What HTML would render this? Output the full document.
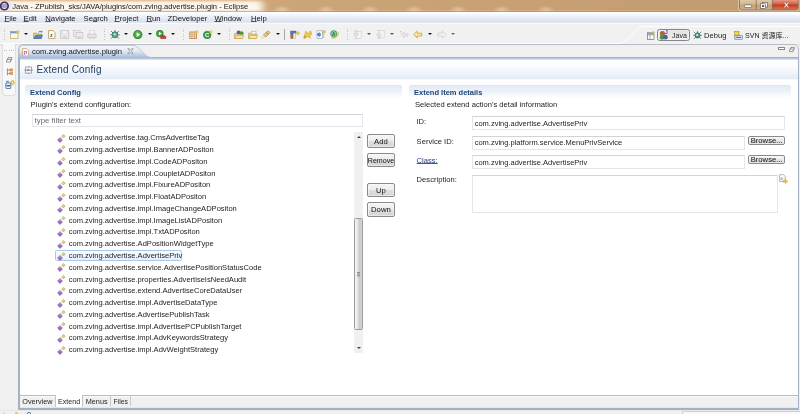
<!DOCTYPE html>
<html><head><meta charset="utf-8"><title>Java - ZPublish_sks/JAVA/plugins/com.zving.advertise.plugin - Eclipse</title>
<style>
html,body{margin:0;padding:0;}
body{width:800px;height:414px;position:relative;overflow:hidden;background:#f0f0f0;font-family:"Liberation Sans","Noto Sans CJK SC",sans-serif;font-size:7.62px;color:#242424;}
.a{position:absolute;}
.t{position:absolute;white-space:nowrap;line-height:10px;height:10px;}
#title{left:0;top:0;width:800px;height:12px;background:linear-gradient(90deg,#d8b690 0px,#d0ab80 200px,#cba478 300px,#c8a074 520px,#c29a70 800px);overflow:hidden;}
#title .glow{position:absolute;left:-30px;top:1.5px;width:290px;height:10px;background:#fbf7f1;border-radius:5px;filter:blur(2.6px);box-shadow:0 0 5px 4px #f8efe0;}
#title .lav{position:absolute;left:-8px;top:1px;width:20px;height:11px;background:#e6e2ee;border-radius:5px;filter:blur(2.5px);}
#title:after{content:"";position:absolute;left:0;top:0;width:800px;height:12px;background:linear-gradient(180deg,rgba(255,255,255,0) 0,rgba(255,255,255,0) 10.2px,rgba(236,205,160,.6) 10.9px,rgba(165,134,98,.6) 11.6px,rgba(190,165,135,.7) 12px);}
#title .top{position:absolute;left:0;top:0;width:300px;height:2.4px;background:linear-gradient(180deg,rgba(222,160,96,.65) 0,rgba(222,165,100,.22) 1.2px,rgba(222,165,100,0) 2.4px);-webkit-mask-image:linear-gradient(90deg,#000 0,#000 82%,transparent 100%);mask-image:linear-gradient(90deg,#000 0,#000 82%,transparent 100%);}
#menubar{left:0;top:12px;width:800px;height:11.4px;background:linear-gradient(180deg,#ffffff 0,#fafbfe 1.5px,#edf0f8 4.5px,#e0e6f3 7.5px,#dde3f1 10px,#e6eaf4 11.4px);}
#toolbar{left:0;top:23.4px;width:800px;height:20.6px;background:#f1f1f1;border-top:1px solid #fafafa;box-sizing:border-box;}
.m{top:14px;font-size:7.7px;color:#161616;margin-left:0.5px;}
u{text-decoration:underline;text-underline-offset:0.4px;text-decoration-thickness:0.6px;text-decoration-color:#555;}
.row{position:absolute;left:57px;height:10px;line-height:10px;white-space:nowrap;}
.row .tx{position:absolute;left:11.7px;top:0;font-size:7.57px;}
.ico{position:absolute;left:0;top:0.5px;width:9px;height:9px;}
.btn{position:absolute;box-sizing:border-box;border:1px solid #8a8a8a;border-radius:2px;background:linear-gradient(180deg,#f5f5f5 0,#ededed 48%,#dfdfdf 52%,#d3d3d3 100%);text-align:center;font-size:7.7px;color:#111;box-shadow:inset 0 0 0 0.6px #fcfcfc;white-space:nowrap;overflow:hidden;}
.row.sel::before{content:"";position:absolute;left:-2px;top:-1.4px;width:127.4px;height:11.8px;box-sizing:border-box;border:1px solid #a9c6ec;border-radius:1.5px;background:linear-gradient(180deg,#fafcff,#e6f0fc);}
.tx2{font-size:7.5px;}
.inp{position:absolute;box-sizing:border-box;border:1px solid #e3e6ea;border-top-color:#d0d4da;background:#fff;}
</style></head><body>
<div id="root" style="position:absolute;left:0;top:0;width:800px;height:414px;will-change:transform;">

<!-- title bar -->
<div class="a" id="title"><div class="a" style="left:260px;top:0;width:308px;height:12px;background:radial-gradient(ellipse 9px 4.5px at 22px 10px,rgba(255,244,222,.42),rgba(255,244,222,0)) 0 0/44px 12px repeat-x;"></div><div class="glow"></div><div class="lav"></div><div class="top"></div></div>
<svg class="a" style="left:0;top:1px" width="10" height="10" viewBox="0 0 10 10"><circle cx="4.4" cy="5" r="4.6" fill="#3a2f6a"/><circle cx="4.4" cy="5" r="3" fill="#e8e6f2"/><rect x="0.6" y="3.6" width="7.6" height="0.7" fill="#3a2f6a"/><rect x="0.6" y="5.6" width="7.6" height="0.7" fill="#3a2f6a"/></svg>
<div class="t" style="left:12.2px;top:1.6px;font-size:7.57px;color:#161616;">Java - ZPublish_sks/JAVA/plugins/com.zving.advertise.plugin - Eclipse</div>
<!-- window controls -->
<svg class="a" style="left:737px;top:0" width="63" height="12" viewBox="0 0 63 12">
<defs>
<linearGradient id="wc1" x1="0" y1="0" x2="0" y2="1"><stop offset="0" stop-color="#e2cdb2"/><stop offset="0.45" stop-color="#d3b892"/><stop offset="0.55" stop-color="#c4a27a"/><stop offset="1" stop-color="#cfb08a"/></linearGradient>
<linearGradient id="wc2" x1="0" y1="0" x2="0" y2="1"><stop offset="0" stop-color="#e8a892"/><stop offset="0.45" stop-color="#d8604a"/><stop offset="0.55" stop-color="#c63a20"/><stop offset="1" stop-color="#dc7a52"/></linearGradient>
</defs>
<path d="M2 -1 L2 8 Q2 10.4 4.4 10.4 L59 10.4 Q61.6 10.4 61.6 8 L61.6 -1Z" fill="none" stroke="#efe0cc" stroke-width="1.6" opacity="0.7"/>
<path d="M2.5 -1 L2.5 8 Q2.5 10 4.5 10 L35.5 10 L35.5 -1Z" fill="url(#wc1)"/>
<path d="M35.5 -1 L35.5 10 L59 10 Q61.2 10 61.2 8 L61.2 -1Z" fill="url(#wc2)"/>
<path d="M2.5 -1 L2.5 8 Q2.5 10 4.5 10 L59 10 Q61.2 10 61.2 8 L61.2 -1" fill="none" stroke="#7c6048" stroke-width="0.7"/>
<path d="M19.2 0 L19.2 10 M35.4 0 L35.4 10" stroke="#7c6048" stroke-width="0.7"/>
<rect x="7.6" y="4.9" width="7" height="2.6" rx="0.6" fill="#fff" stroke="#5a5048" stroke-width="0.6"/>
<rect x="25.4" y="2.4" width="5" height="4.6" fill="#f4f4f4" stroke="#5a5048" stroke-width="0.6"/>
<rect x="23.6" y="3.8" width="5" height="4.6" fill="#fff" stroke="#5a5048" stroke-width="0.6"/>
<rect x="25" y="5.2" width="2.2" height="1.8" fill="#4a4a52"/>
<path d="M46.4 2.2 L48 2.2 L49.4 4 L50.8 2.2 L52.4 2.2 L50.3 5 L52.4 7.8 L50.8 7.8 L49.4 6 L48 7.8 L46.4 7.8 L48.5 5Z" fill="#fff" stroke="#7a3a2a" stroke-width="0.4"/>
</svg>

<!-- menu bar -->
<div class="a" id="menubar"></div>
<div class="t m" style="left:4px"><u>F</u>ile</div>
<div class="t m" style="left:23px"><u>E</u>dit</div>
<div class="t m" style="left:44.8px"><u>N</u>avigate</div>
<div class="t m" style="left:83px">Se<u>a</u>rch</div>
<div class="t m" style="left:114px"><u>P</u>roject</div>
<div class="t m" style="left:146px"><u>R</u>un</div>
<div class="t m" style="left:167px">ZDeveloper</div>
<div class="t m" style="left:214px"><u>W</u>indow</div>
<div class="t m" style="left:250.5px"><u>H</u>elp</div>

<!-- toolbar -->
<div class="a" id="toolbar"></div>
<div class="a" style="left:4px;top:29px;width:1px;height:12px;background:repeating-linear-gradient(180deg,#c4c4c4 0,#c4c4c4 1px,transparent 1px,transparent 2.4px);"></div>
<div class="a" style="left:104px;top:29px;width:1px;height:12px;background:repeating-linear-gradient(180deg,#c4c4c4 0,#c4c4c4 1px,transparent 1px,transparent 2.4px);"></div>
<div class="a" style="left:183px;top:29px;width:1px;height:12px;background:repeating-linear-gradient(180deg,#c4c4c4 0,#c4c4c4 1px,transparent 1px,transparent 2.4px);"></div>
<div class="a" style="left:229px;top:29px;width:1px;height:12px;background:repeating-linear-gradient(180deg,#c4c4c4 0,#c4c4c4 1px,transparent 1px,transparent 2.4px);"></div>
<div class="a" style="left:347px;top:29px;width:1px;height:12px;background:repeating-linear-gradient(180deg,#c4c4c4 0,#c4c4c4 1px,transparent 1px,transparent 2.4px);"></div>
<svg class="a" style="left:10px;top:30.4px" width="10" height="9" viewBox="0 0 10 9"><rect x="0.5" y="1.5" width="7.5" height="7" fill="#fbf6dc" stroke="#b9a66a" stroke-width="0.7"/><rect x="0.5" y="1.5" width="7.5" height="1.8" fill="#6f9bd0"/><path d="M7.8 0 L8.4 1.4 L9.8 1.9 L8.4 2.5 L7.8 3.9 L7.2 2.5 L5.8 1.9 L7.2 1.4Z" fill="#f3d34a" stroke="#c9a227" stroke-width="0.3"/></svg>
<div class="a" style="left:24px;top:33.2px;width:0;height:0;border-left:2.3px solid transparent;border-right:2.3px solid transparent;border-top:2.6px solid #111;"></div>
<svg class="a" style="left:33px;top:30.4px" width="10" height="9" viewBox="0 0 10 9"><path d="M0.5 8.5 L0.5 3 L3.5 3 L4.2 4 L8.5 4 L8.5 8.5Z" fill="#f0d27a" stroke="#b8923c" stroke-width="0.6"/><path d="M0.8 8.5 L2.5 5.2 L9.6 5.2 L8.2 8.5Z" fill="#4f86c6" stroke="#2f5f9c" stroke-width="0.5"/><path d="M5 3.2 C5.5 1 7.5 0.8 8.6 1.4 L8.2 0.2 L9.8 1.9 L7.6 2.8 L8.2 2 C7.2 1.6 6 2 5 3.2Z" fill="#3f74bd"/></svg>
<svg class="a" style="left:48px;top:30.4px" width="8" height="9" viewBox="0 0 8 9"><path d="M0.5 0.5 L5 0.5 L7 2.5 L7 8.5 L0.5 8.5Z" fill="#fffdf2" stroke="#b79a4a" stroke-width="0.8"/><text x="2.1" y="7" font-size="5.6" font-weight="bold" fill="#2a57a8" font-family="Liberation Sans,sans-serif">z</text></svg>
<svg class="a" style="left:60px;top:30.4px" width="10" height="9" viewBox="0 0 10 9"><rect x="0.7" y="0.7" width="8" height="7.8" fill="#ececec" stroke="#c4c4c4" stroke-width="0.8"/><rect x="2.4" y="0.9" width="4.6" height="3" fill="#f8f8f8" stroke="#cfcfcf" stroke-width="0.4"/><rect x="2.6" y="5.6" width="4" height="2.8" fill="#d6d6d6"/></svg>
<svg class="a" style="left:73px;top:30.4px" width="11" height="9" viewBox="0 0 11 9"><rect x="0.6" y="0.6" width="6.5" height="6" fill="#ededed" stroke="#c8c8c8" stroke-width="0.7"/><rect x="3" y="2.6" width="6.8" height="6" fill="#ebebeb" stroke="#c4c4c4" stroke-width="0.7"/><rect x="4.6" y="6" width="3.4" height="2.4" fill="#d4d4d4"/></svg>
<svg class="a" style="left:87px;top:30.4px" width="10" height="9" viewBox="0 0 10 9"><rect x="2.4" y="0.6" width="5" height="4" fill="#f6f6f6" stroke="#cdcdcd" stroke-width="0.6"/><rect x="0.6" y="4" width="8.6" height="3.6" rx="0.8" fill="#e4e4e4" stroke="#c2c2c2" stroke-width="0.7"/><rect x="1.6" y="7.2" width="6.6" height="1.2" fill="#d0d0d0"/></svg>
<svg class="a" style="left:110px;top:30.4px" width="10" height="9" viewBox="0 0 10 9"><g stroke="#2f6f6a" stroke-width="0.8" fill="none"><path d="M1 1 L3 3 M9 1 L7 3 M0.3 4.8 L2.5 4.8 M9.7 4.8 L7.5 4.8 M1 8.6 L3 6.6 M9 8.6 L7 6.6 M5 0.2 L5 2"/></g><ellipse cx="5" cy="4.8" rx="2.9" ry="3" fill="#5aa884" stroke="#27685c" stroke-width="0.7"/><ellipse cx="4.6" cy="4.2" rx="1.3" ry="1.3" fill="#a9dcc0"/></svg>
<div class="a" style="left:124px;top:33.2px;width:0;height:0;border-left:2.3px solid transparent;border-right:2.3px solid transparent;border-top:2.6px solid #111;"></div>
<svg class="a" style="left:133px;top:30.4px" width="10" height="9" viewBox="0 0 10 9"><circle cx="4.8" cy="4.6" r="4.3" fill="#3f9a3c" stroke="#2a7a2c" stroke-width="0.6"/><circle cx="4.8" cy="4.2" r="3.2" fill="#5fb75a" opacity="0.6"/><path d="M3.6 2.2 L7.2 4.6 L3.6 7Z" fill="#fff"/></svg>
<div class="a" style="left:147.5px;top:33.2px;width:0;height:0;border-left:2.3px solid transparent;border-right:2.3px solid transparent;border-top:2.6px solid #111;"></div>
<svg class="a" style="left:156px;top:30.4px" width="11" height="9" viewBox="0 0 11 9"><circle cx="3.8" cy="3.6" r="3.5" fill="#3f9a3c" stroke="#2a7a2c" stroke-width="0.5"/><path d="M2.8 1.7 L5.8 3.6 L2.8 5.5Z" fill="#fff"/><rect x="4.6" y="6.2" width="5.4" height="2.6" rx="0.5" fill="#d23c34" stroke="#9c2320" stroke-width="0.4"/><rect x="6.2" y="5.2" width="2.2" height="1.2" fill="none" stroke="#9c2320" stroke-width="0.5"/></svg>
<div class="a" style="left:171px;top:33.2px;width:0;height:0;border-left:2.3px solid transparent;border-right:2.3px solid transparent;border-top:2.6px solid #111;"></div>
<svg class="a" style="left:189px;top:30.4px" width="10" height="9" viewBox="0 0 10 9"><rect x="0.8" y="2" width="6.8" height="6.4" fill="#fdf0d0" stroke="#b87a44" stroke-width="0.8"/><path d="M3 2 L3 8.4 M5.4 2 L5.4 8.4 M0.8 4.2 L7.6 4.2 M0.8 6.3 L7.6 6.3" stroke="#c08850" stroke-width="0.6"/><path d="M7.8 0 L8.4 1.4 L9.8 1.9 L8.4 2.5 L7.8 3.9 L7.2 2.5 L5.8 1.9 L7.2 1.4Z" fill="#f3d34a" stroke="#c9a227" stroke-width="0.3"/></svg>
<svg class="a" style="left:202.5px;top:30.4px" width="10" height="9" viewBox="0 0 10 9"><circle cx="4.2" cy="5" r="3.8" fill="#3c9a4a" stroke="#23763a" stroke-width="0.6"/><text x="2" y="7.1" font-size="6" font-weight="bold" fill="#fff" font-family="Liberation Sans,sans-serif">C</text><path d="M7.8 0 L8.4 1.4 L9.8 1.9 L8.4 2.5 L7.8 3.9 L7.2 2.5 L5.8 1.9 L7.2 1.4Z" fill="#f3d34a" stroke="#c9a227" stroke-width="0.3"/></svg>
<div class="a" style="left:216.5px;top:33.2px;width:0;height:0;border-left:2.3px solid transparent;border-right:2.3px solid transparent;border-top:2.6px solid #111;"></div>
<svg class="a" style="left:234px;top:30.4px" width="11" height="9" viewBox="0 0 11 9"><circle cx="4.6" cy="2.4" r="2" fill="#5a58a8"/><circle cx="7.6" cy="3.2" r="2" fill="#3f9a4a"/><path d="M0.6 8.5 L0.6 3.6 L3 3.6 L3.8 4.6 L8.6 4.6 L8.6 8.5Z" fill="#f0d27a" stroke="#b8923c" stroke-width="0.6"/><path d="M0.8 8.5 L2.2 5.6 L9.8 5.6 L8.4 8.5Z" fill="#f8e6a8" stroke="#b8923c" stroke-width="0.5"/></svg>
<svg class="a" style="left:247.5px;top:30.4px" width="10" height="9" viewBox="0 0 10 9"><rect x="3.4" y="1.2" width="4.6" height="4" fill="#f6f8fc" stroke="#8a9ec0" stroke-width="0.5"/><path d="M0.6 8.5 L0.6 3.2 L3 3.2 L3.8 4.2 L8.4 4.2 L8.4 8.5Z" fill="#f0d27a" stroke="#b8923c" stroke-width="0.6"/><path d="M0.8 8.5 L2.2 5.4 L9.6 5.4 L8.2 8.5Z" fill="#f8e6a8" stroke="#b8923c" stroke-width="0.5"/></svg>
<svg class="a" style="left:261px;top:30.4px" width="10" height="9" viewBox="0 0 10 9"><path d="M0.8 8.4 L2.6 5.2 L4.8 6.8Z" fill="#f8f1b8" stroke="#d6c36a" stroke-width="0.4"/><path d="M2.4 5 L6.6 0.8 L9.2 2.6 L5 7Z" fill="#ecc878" stroke="#a88848" stroke-width="0.6"/><path d="M5 2.6 L7.4 4.4" stroke="#7a7a9a" stroke-width="0.9"/></svg>
<div class="a" style="left:276px;top:33.2px;width:0;height:0;border-left:2.3px solid transparent;border-right:2.3px solid transparent;border-top:2.6px solid #111;"></div>
<div class="a" style="left:284px;top:29.4px;width:1px;height:10.4px;background:#a8a8a8;"></div>
<svg class="a" style="left:290px;top:30.4px" width="10" height="9" viewBox="0 0 10 9"><rect x="0.6" y="1" width="5.4" height="2.2" fill="#4a7cc0" stroke="#2f5a9a" stroke-width="0.4"/><rect x="0.8" y="3.2" width="2.2" height="5.2" fill="#a8703c" stroke="#7a4c22" stroke-width="0.4"/><rect x="3.4" y="3.4" width="2.4" height="5" fill="#f0f0f0" stroke="#9a9a9a" stroke-width="0.4"/><path d="M5.6 2.6 L7.6 2.6 L7.6 1.2 L9.8 3.2 L7.6 5.2 L7.6 3.8 L5.6 3.8Z" fill="#f0c840" stroke="#b08a20" stroke-width="0.3"/></svg>
<svg class="a" style="left:303px;top:30.4px" width="10" height="9" viewBox="0 0 10 9"><path d="M1 6.6 L3 1.2 L5 3.8 L7.6 0.8 L8.8 4.4 L6.6 5.4 L7.4 8.2 L4.6 6.4 L1.6 8.6Z" fill="#f3cc4a" stroke="#b88c22" stroke-width="0.5"/><path d="M0.4 7.8 L3 6.4" stroke="#a8703c" stroke-width="0.8"/></svg>
<svg class="a" style="left:316px;top:30.4px" width="10" height="9" viewBox="0 0 10 9"><rect x="1" y="0.8" width="5.6" height="7.6" fill="#fbfbfb" stroke="#8a9ab8" stroke-width="0.6"/><path d="M0.6 4.6 L3.6 2 L3.6 7.2Z" fill="#3f74c4"/><rect x="3.4" y="3.4" width="1.4" height="2.4" fill="#3f74c4"/><circle cx="8" cy="1.8" r="1.3" fill="#f3d34a" stroke="#b08a20" stroke-width="0.4"/><path d="M7.6 3.4 L7.6 8" stroke="#b8a050" stroke-width="0.6"/></svg>
<svg class="a" style="left:330px;top:30.4px" width="10" height="9" viewBox="0 0 10 9"><circle cx="3.8" cy="3.8" r="3.2" fill="#8cc9a0" stroke="#3a8a5a" stroke-width="0.7"/><text x="2.1" y="5.6" font-size="4.6" font-weight="bold" fill="#2a6a44" font-family="Liberation Sans,sans-serif">A</text><path d="M1.4 8 C4 9 7.6 8.4 8.8 1.8 L7.4 5 C6.4 7 4 7.6 1.4 8Z" fill="#f0d040" stroke="#b89a20" stroke-width="0.3"/></svg>
<svg class="a" style="left:352.5px;top:30.4px" width="9" height="9" viewBox="0 0 9 9"><rect x="2.6" y="1.6" width="5.6" height="7" fill="#f4f4f4" stroke="#cfcfcf" stroke-width="0.6"/><path d="M2 0.6 L4 0.6 L4 4 L5.4 4 L3 6.6 L0.6 4 L2 4Z" fill="#e6e6e6" stroke="#c0c0c0" stroke-width="0.5"/><path d="M1 8.4 L5 8.4" stroke="#cfcfcf" stroke-width="0.6"/></svg>
<div class="a" style="left:367px;top:33.2px;width:0;height:0;border-left:2.3px solid transparent;border-right:2.3px solid transparent;border-top:2.6px solid #555;"></div>
<svg class="a" style="left:376px;top:30.4px" width="9" height="9" viewBox="0 0 9 9"><rect x="2.6" y="0.6" width="5.6" height="7" fill="#f4f4f4" stroke="#cfcfcf" stroke-width="0.6"/><path d="M2 8.4 L4 8.4 L4 5 L5.4 5 L3 2.4 L0.6 5 L2 5Z" fill="#e6e6e6" stroke="#c0c0c0" stroke-width="0.5"/><path d="M1 0.6 L5 0.6" stroke="#cfcfcf" stroke-width="0.6"/></svg>
<div class="a" style="left:390px;top:33.2px;width:0;height:0;border-left:2.3px solid transparent;border-right:2.3px solid transparent;border-top:2.6px solid #555;"></div>
<svg class="a" style="left:399px;top:30.4px" width="10" height="9" viewBox="0 0 10 9"><path d="M2 4.8 L5 2.2 L5 3.8 L9 3.8 L9 6 L5 6 L5 7.6Z" fill="#ececec" stroke="#c4c4c4" stroke-width="0.6"/><path d="M1.6 0.4 L2 1.4 L3 1.6 L2 2 L1.6 3 L1.2 2 L0.2 1.6 L1.2 1.4Z" fill="#bdbdbd"/></svg>
<svg class="a" style="left:413px;top:30.4px" width="10" height="9" viewBox="0 0 10 9"><path d="M0.6 4.6 L4.2 1.2 L4.2 3.2 L8.8 3.2 L8.8 6 L4.2 6 L4.2 8Z" fill="#fbe89c" stroke="#d0a23a" stroke-width="0.8"/></svg>
<div class="a" style="left:427.5px;top:33.2px;width:0;height:0;border-left:2.3px solid transparent;border-right:2.3px solid transparent;border-top:2.6px solid #111;"></div>
<svg class="a" style="left:437px;top:30.4px" width="10" height="9" viewBox="0 0 10 9"><path d="M9 4.6 L5.4 1.2 L5.4 3.2 L0.8 3.2 L0.8 6 L5.4 6 L5.4 8Z" fill="#f3f3f3" stroke="#c8c8c8" stroke-width="0.7"/></svg>
<div class="a" style="left:450.5px;top:33.2px;width:0;height:0;border-left:2.3px solid transparent;border-right:2.3px solid transparent;border-top:2.6px solid #666;"></div>
<svg class="a" style="left:0;top:24px" width="800" height="22" viewBox="0 0 800 22"><path d="M0 19.4 L618 19.4 C632 19.4 630 2.4 646 2.4 L800 2.4" fill="none" stroke="#ffffff" stroke-width="1"/><path d="M0 20.6 L800 20.6" stroke="#d6d6d6" stroke-width="0.8"/></svg>
<svg class="a" style="left:646.8px;top:30.8px" width="8" height="9" viewBox="0 0 7 8"><rect x="0.5" y="1.6" width="5.6" height="5.8" fill="#fff" stroke="#6a6a6a" stroke-width="0.6"/><path d="M0.5 3.4 L6.1 3.4 M2.6 3.4 L2.6 7.4" stroke="#6a6a6a" stroke-width="0.5"/><rect x="0.8" y="1.9" width="5" height="1.2" fill="#7a9ad0"/><path d="M5.6 0 L6 0.9 L7 1.2 L6 1.6 L5.6 2.5 L5.2 1.6 L4.2 1.2 L5.2 0.9Z" fill="#f3d34a" stroke="#c9a227" stroke-width="0.2"/></svg>
<div class="a" style="left:657.4px;top:29px;width:32.8px;height:12.2px;box-sizing:border-box;border:1px solid #868686;border-radius:2.5px;background:linear-gradient(180deg,#e2e2e2,#eeeeee);box-shadow:inset 0 0 0 0.6px #f6f6f6;"></div>
<svg class="a" style="left:659.2px;top:30px" width="10.4" height="10.4" viewBox="0 0 9 9"><circle cx="3" cy="3" r="2.2" fill="#a8683c"/><circle cx="2.6" cy="6.4" r="2" fill="#3f9a4a"/><circle cx="5.6" cy="6.2" r="2" fill="#5a58a8"/><text x="5.2" y="3.6" font-size="4.4" font-weight="bold" fill="#2a57a8" font-family="Liberation Sans,sans-serif">J</text></svg>
<div class="t" style="left:672px;top:31px;font-size:7px;">Java</div>
<svg class="a" style="left:693px;top:30.5px" width="9" height="9" viewBox="0 0 9 9"><g stroke="#2f6f6a" stroke-width="0.7" fill="none"><path d="M0.8 0.8 L2.6 2.6 M8.2 0.8 L6.4 2.6 M0.2 4.4 L2.2 4.4 M8.8 4.4 L6.8 4.4 M0.8 8 L2.6 6.2 M8.2 8 L6.4 6.2 M4.5 0 L4.5 1.8"/></g><ellipse cx="4.5" cy="4.4" rx="2.5" ry="2.6" fill="#4f9f84" stroke="#1f5a50" stroke-width="0.7"/><ellipse cx="4.2" cy="4" rx="1.1" ry="1.1" fill="#c9ecd8"/></svg>
<div class="t" style="left:704px;top:31px;font-size:7.6px;">Debug</div>
<svg class="a" style="left:733.5px;top:30.5px" width="9" height="9" viewBox="0 0 9 9"><rect x="0.6" y="0.6" width="4.4" height="4" fill="#f3d34a" stroke="#a8842c" stroke-width="0.6"/><rect x="0.6" y="4.4" width="7.8" height="4" rx="0.6" fill="#e6eaf2" stroke="#4a6a9a" stroke-width="0.6"/><rect x="1.6" y="5.8" width="5.6" height="1.2" fill="#4a7cc0"/></svg>
<div class="t" style="left:745px;top:31px;font-size:7.05px;">SVN 资源库...</div>



<!-- left trim bar -->
<div class="a" style="left:2px;top:44px;width:14px;height:52px;background:#f8f8f8;border:1px solid #dedede;border-top:none;border-radius:0 0 4px 4px;box-sizing:border-box;"></div>
<div class="a" style="left:4px;top:49.5px;width:11px;height:1px;background:repeating-linear-gradient(90deg,#bdbdbd 0,#bdbdbd 1px,transparent 1px,transparent 2.3px);"></div>
<svg class="a" style="left:5.8px;top:56.6px" width="7" height="6" viewBox="0 0 7 6"><path d="M2 0.6 L6 0.6 L5.4 3.2 L1.4 3.2Z" fill="#fff" stroke="#6a6a6a" stroke-width="0.7"/><path d="M1 2.4 L5 2.4 L4.4 5 L0.4 5Z" fill="#fff" stroke="#6a6a6a" stroke-width="0.7"/></svg>
<svg class="a" style="left:6px;top:68px" width="8" height="8" viewBox="0 0 8 8"><path d="M1.4 0.4 L1.4 7.4 M1.4 2 L4 2 M1.4 5.6 L4 5.6" stroke="#9a7a4c" stroke-width="0.8" fill="none"/><rect x="3.8" y="0.9" width="3" height="2.2" fill="#e8a050" stroke="#b87a3c" stroke-width="0.4"/><rect x="3.8" y="4.5" width="3" height="2.2" fill="#e8a050" stroke="#b87a3c" stroke-width="0.4"/></svg>
<svg class="a" style="left:4.5px;top:80px" width="10" height="9" viewBox="0 0 10 9"><rect x="0.8" y="2.8" width="5" height="5.8" rx="0.8" fill="#e8eef8" stroke="#3a5a94" stroke-width="0.8"/><rect x="1.6" y="5" width="3.4" height="1.4" fill="#3a5a94"/><path d="M1.6 2.6 L1.6 1.2 L4 1.2" stroke="#3a5a94" stroke-width="0.7" fill="none"/><ellipse cx="7.6" cy="2.6" rx="1.5" ry="2.1" fill="#fbe27a" stroke="#c49a20" stroke-width="0.8"/></svg>

<!-- editor tab folder -->
<div class="a" style="left:17.9px;top:44.1px;width:781.5px;height:365.5px;box-sizing:border-box;border:1px solid #b7bcc6;border-radius:5px 5px 0 0;background:#f0f0f0;"></div>
<div class="a" style="left:17.9px;top:57.4px;width:781.5px;height:352.2px;box-sizing:border-box;background:#a3b1c5;"></div>
<div class="a" style="left:20.1px;top:57.4px;width:777.8px;height:2.6px;background:linear-gradient(180deg,#96aac6 0,#b4c5dc 45%,#e6edf6 100%);"></div>
<!-- active tab -->
<svg class="a" style="left:18.9px;top:44.5px" width="140" height="13.4" viewBox="0 0 140 13.4" preserveAspectRatio="none"><defs><linearGradient id="tg" x1="0" y1="0" x2="0" y2="1"><stop offset="0" stop-color="#f7f9fd"/><stop offset="0.45" stop-color="#dfe8f4"/><stop offset="1" stop-color="#9fb8d8"/></linearGradient></defs><path d="M0 13.4 L0 4 Q0 0.4 4 0.4 L113 0.4 C122 0.4 124 12.9 134 12.9 L134 13.4 Z" fill="url(#tg)" stroke="#b4bccb" stroke-width="0.8"/></svg>
<svg class="a" style="left:22px;top:47.6px" width="7" height="8.4" viewBox="0 0 7 8.4"><path d="M0.5 0.5 L4.6 0.5 L6.5 2.4 L6.5 7.9 L0.5 7.9Z" fill="#fffaf0" stroke="#c8a878" stroke-width="0.8"/><text x="1.5" y="6.8" font-size="5.6" font-weight="bold" fill="#d850b0" font-family="Liberation Sans,sans-serif">P</text></svg>
<div class="t" style="left:32px;top:47.3px;font-size:7.65px;color:#161616;">com.zving.advertise.plugin</div>
<svg class="a" style="left:126.6px;top:48.4px" width="7" height="6.4" viewBox="0 0 7 6.4"><path d="M0.8 0.6 L2.2 0.6 L3.5 2.2 L4.8 0.6 L6.2 0.6 L4.3 3.1 L6.2 5.6 L4.8 5.6 L3.5 4 L2.2 5.6 L0.8 5.6 L2.7 3.1Z" fill="#fdfdfd" stroke="#7a7a7a" stroke-width="0.6"/></svg>
<div class="a" style="left:778.4px;top:46.9px;width:6.2px;height:2.8px;box-sizing:border-box;border:0.7px solid #888;background:#fff;"></div>
<svg class="a" style="left:788.6px;top:47.2px" width="6" height="5.4" viewBox="0 0 6 5.4"><path d="M1.8 0.5 L5.4 0.5 L4.9 2.8 L1.3 2.8Z" fill="#fff" stroke="#6a6a6a" stroke-width="0.7"/><path d="M0.9 2 L4.5 2 L4 4.6 L0.4 4.6Z" fill="#fff" stroke="#6a6a6a" stroke-width="0.7"/></svg>

<!-- content -->
<div class="a" id="content" style="left:20.1px;top:60px;width:777.8px;height:335px;background:#fff;"></div>
<!-- form header -->
<div class="a" style="left:20.1px;top:60px;width:777.8px;height:19.4px;background:linear-gradient(180deg,#ffffff 0,#fbfcfe 30%,#f0f4fa 65%,#e4ebf6 100%);border-bottom:1px solid #f6f8fc;"></div>
<svg class="a" style="left:24px;top:66px" width="9.2" height="8.4" viewBox="0 0 9.2 8.4"><rect x="1.4" y="1" width="6.2" height="6.2" fill="none" stroke="#9a9a9a" stroke-width="0.8"/><path d="M0.2 4.1 L9 4.1" stroke="#7a8aa0" stroke-width="0.9"/><path d="M3.4 3 L5.8 4.1 L3.4 5.2Z" fill="#5a7ab0"/><circle cx="4.5" cy="1" r="0.7" fill="#d08a8a"/><circle cx="4.5" cy="7.2" r="0.7" fill="#d08a8a"/></svg>
<div class="t" style="left:36.5px;top:62.8px;font-size:10px;letter-spacing:0.18px;line-height:14px;height:14px;color:#1f3a64;">Extend Config</div>

<!-- left section -->
<div class="a" style="left:25.4px;top:85px;width:376.6px;height:13px;background:linear-gradient(180deg,#e2eaf6 0,#edf2f9 50%,#ffffff 100%);border-radius:3px 3px 0 0;box-shadow:inset 0 0.8px 0 #dbe4f1;"></div>
<div class="t" style="left:30px;top:88px;font-weight:bold;color:#1f4278;font-size:7.5px;">Extend Config</div>
<div class="t" style="left:30.6px;top:100px;font-size:7.72px;">Plugin's extend configuration:</div>
<div class="inp" style="left:32px;top:113.6px;width:331.2px;height:13.4px;"></div>
<div class="t" style="left:34.6px;top:115.8px;color:#6a6a6a;font-size:7.8px;">type filter text</div>
<!-- tree -->
<div class="a" style="left:32px;top:131px;width:331px;height:222px;background:#fff;"></div>
<div class="row" style="top:133.20px"><svg class="ico" viewBox="0 0 9 9"><path d="M0.6 6 L3 3.6 L5.4 6 L3 8.4 Z" fill="#9a6cc0" stroke="#6b4594" stroke-width="0.6"/><path d="M1.8 5.6 L3 4.4 L4.2 5.6" fill="none" stroke="#e6d4f5" stroke-width="0.6"/><rect x="5.2" y="1" width="2.4" height="2.4" transform="rotate(45 6.4 2.2)" fill="#ecd574" stroke="#a8892c" stroke-width="0.5"/></svg><span class="tx">com.zving.advertise.tag.CmsAdvertiseTag</span></div>
<div class="row" style="top:144.98px"><svg class="ico" viewBox="0 0 9 9"><path d="M0.6 6 L3 3.6 L5.4 6 L3 8.4 Z" fill="#9a6cc0" stroke="#6b4594" stroke-width="0.6"/><path d="M1.8 5.6 L3 4.4 L4.2 5.6" fill="none" stroke="#e6d4f5" stroke-width="0.6"/><rect x="5.2" y="1" width="2.4" height="2.4" transform="rotate(45 6.4 2.2)" fill="#ecd574" stroke="#a8892c" stroke-width="0.5"/></svg><span class="tx">com.zving.advertise.impl.BannerADPositon</span></div>
<div class="row" style="top:156.76px"><svg class="ico" viewBox="0 0 9 9"><path d="M0.6 6 L3 3.6 L5.4 6 L3 8.4 Z" fill="#9a6cc0" stroke="#6b4594" stroke-width="0.6"/><path d="M1.8 5.6 L3 4.4 L4.2 5.6" fill="none" stroke="#e6d4f5" stroke-width="0.6"/><rect x="5.2" y="1" width="2.4" height="2.4" transform="rotate(45 6.4 2.2)" fill="#ecd574" stroke="#a8892c" stroke-width="0.5"/></svg><span class="tx">com.zving.advertise.impl.CodeADPositon</span></div>
<div class="row" style="top:168.54px"><svg class="ico" viewBox="0 0 9 9"><path d="M0.6 6 L3 3.6 L5.4 6 L3 8.4 Z" fill="#9a6cc0" stroke="#6b4594" stroke-width="0.6"/><path d="M1.8 5.6 L3 4.4 L4.2 5.6" fill="none" stroke="#e6d4f5" stroke-width="0.6"/><rect x="5.2" y="1" width="2.4" height="2.4" transform="rotate(45 6.4 2.2)" fill="#ecd574" stroke="#a8892c" stroke-width="0.5"/></svg><span class="tx">com.zving.advertise.impl.CoupletADPositon</span></div>
<div class="row" style="top:180.32px"><svg class="ico" viewBox="0 0 9 9"><path d="M0.6 6 L3 3.6 L5.4 6 L3 8.4 Z" fill="#9a6cc0" stroke="#6b4594" stroke-width="0.6"/><path d="M1.8 5.6 L3 4.4 L4.2 5.6" fill="none" stroke="#e6d4f5" stroke-width="0.6"/><rect x="5.2" y="1" width="2.4" height="2.4" transform="rotate(45 6.4 2.2)" fill="#ecd574" stroke="#a8892c" stroke-width="0.5"/></svg><span class="tx">com.zving.advertise.impl.FixureADPositon</span></div>
<div class="row" style="top:192.10px"><svg class="ico" viewBox="0 0 9 9"><path d="M0.6 6 L3 3.6 L5.4 6 L3 8.4 Z" fill="#9a6cc0" stroke="#6b4594" stroke-width="0.6"/><path d="M1.8 5.6 L3 4.4 L4.2 5.6" fill="none" stroke="#e6d4f5" stroke-width="0.6"/><rect x="5.2" y="1" width="2.4" height="2.4" transform="rotate(45 6.4 2.2)" fill="#ecd574" stroke="#a8892c" stroke-width="0.5"/></svg><span class="tx">com.zving.advertise.impl.FloatADPositon</span></div>
<div class="row" style="top:203.88px"><svg class="ico" viewBox="0 0 9 9"><path d="M0.6 6 L3 3.6 L5.4 6 L3 8.4 Z" fill="#9a6cc0" stroke="#6b4594" stroke-width="0.6"/><path d="M1.8 5.6 L3 4.4 L4.2 5.6" fill="none" stroke="#e6d4f5" stroke-width="0.6"/><rect x="5.2" y="1" width="2.4" height="2.4" transform="rotate(45 6.4 2.2)" fill="#ecd574" stroke="#a8892c" stroke-width="0.5"/></svg><span class="tx">com.zving.advertise.impl.ImageChangeADPositon</span></div>
<div class="row" style="top:215.66px"><svg class="ico" viewBox="0 0 9 9"><path d="M0.6 6 L3 3.6 L5.4 6 L3 8.4 Z" fill="#9a6cc0" stroke="#6b4594" stroke-width="0.6"/><path d="M1.8 5.6 L3 4.4 L4.2 5.6" fill="none" stroke="#e6d4f5" stroke-width="0.6"/><rect x="5.2" y="1" width="2.4" height="2.4" transform="rotate(45 6.4 2.2)" fill="#ecd574" stroke="#a8892c" stroke-width="0.5"/></svg><span class="tx">com.zving.advertise.impl.ImageListADPositon</span></div>
<div class="row" style="top:227.44px"><svg class="ico" viewBox="0 0 9 9"><path d="M0.6 6 L3 3.6 L5.4 6 L3 8.4 Z" fill="#9a6cc0" stroke="#6b4594" stroke-width="0.6"/><path d="M1.8 5.6 L3 4.4 L4.2 5.6" fill="none" stroke="#e6d4f5" stroke-width="0.6"/><rect x="5.2" y="1" width="2.4" height="2.4" transform="rotate(45 6.4 2.2)" fill="#ecd574" stroke="#a8892c" stroke-width="0.5"/></svg><span class="tx">com.zving.advertise.impl.TxtADPositon</span></div>
<div class="row" style="top:239.22px"><svg class="ico" viewBox="0 0 9 9"><path d="M0.6 6 L3 3.6 L5.4 6 L3 8.4 Z" fill="#9a6cc0" stroke="#6b4594" stroke-width="0.6"/><path d="M1.8 5.6 L3 4.4 L4.2 5.6" fill="none" stroke="#e6d4f5" stroke-width="0.6"/><rect x="5.2" y="1" width="2.4" height="2.4" transform="rotate(45 6.4 2.2)" fill="#ecd574" stroke="#a8892c" stroke-width="0.5"/></svg><span class="tx">com.zving.advertise.AdPositionWidgetType</span></div>
<div class="row sel" style="top:251.00px"><svg class="ico" viewBox="0 0 9 9"><path d="M0.6 6 L3 3.6 L5.4 6 L3 8.4 Z" fill="#9a6cc0" stroke="#6b4594" stroke-width="0.6"/><path d="M1.8 5.6 L3 4.4 L4.2 5.6" fill="none" stroke="#e6d4f5" stroke-width="0.6"/><rect x="5.2" y="1" width="2.4" height="2.4" transform="rotate(45 6.4 2.2)" fill="#ecd574" stroke="#a8892c" stroke-width="0.5"/></svg><span class="tx">com.zving.advertise.AdvertisePriv</span></div>
<div class="row" style="top:262.78px"><svg class="ico" viewBox="0 0 9 9"><path d="M0.6 6 L3 3.6 L5.4 6 L3 8.4 Z" fill="#9a6cc0" stroke="#6b4594" stroke-width="0.6"/><path d="M1.8 5.6 L3 4.4 L4.2 5.6" fill="none" stroke="#e6d4f5" stroke-width="0.6"/><rect x="5.2" y="1" width="2.4" height="2.4" transform="rotate(45 6.4 2.2)" fill="#ecd574" stroke="#a8892c" stroke-width="0.5"/></svg><span class="tx">com.zving.advertise.service.AdvertisePositionStatusCode</span></div>
<div class="row" style="top:274.56px"><svg class="ico" viewBox="0 0 9 9"><path d="M0.6 6 L3 3.6 L5.4 6 L3 8.4 Z" fill="#9a6cc0" stroke="#6b4594" stroke-width="0.6"/><path d="M1.8 5.6 L3 4.4 L4.2 5.6" fill="none" stroke="#e6d4f5" stroke-width="0.6"/><rect x="5.2" y="1" width="2.4" height="2.4" transform="rotate(45 6.4 2.2)" fill="#ecd574" stroke="#a8892c" stroke-width="0.5"/></svg><span class="tx">com.zving.advertise.properties.AdvertiseIsNeedAudit</span></div>
<div class="row" style="top:286.34px"><svg class="ico" viewBox="0 0 9 9"><path d="M0.6 6 L3 3.6 L5.4 6 L3 8.4 Z" fill="#9a6cc0" stroke="#6b4594" stroke-width="0.6"/><path d="M1.8 5.6 L3 4.4 L4.2 5.6" fill="none" stroke="#e6d4f5" stroke-width="0.6"/><rect x="5.2" y="1" width="2.4" height="2.4" transform="rotate(45 6.4 2.2)" fill="#ecd574" stroke="#a8892c" stroke-width="0.5"/></svg><span class="tx">com.zving.advertise.extend.AdvertiseCoreDataUser</span></div>
<div class="row" style="top:298.12px"><svg class="ico" viewBox="0 0 9 9"><path d="M0.6 6 L3 3.6 L5.4 6 L3 8.4 Z" fill="#9a6cc0" stroke="#6b4594" stroke-width="0.6"/><path d="M1.8 5.6 L3 4.4 L4.2 5.6" fill="none" stroke="#e6d4f5" stroke-width="0.6"/><rect x="5.2" y="1" width="2.4" height="2.4" transform="rotate(45 6.4 2.2)" fill="#ecd574" stroke="#a8892c" stroke-width="0.5"/></svg><span class="tx">com.zving.advertise.impl.AdvertiseDataType</span></div>
<div class="row" style="top:309.90px"><svg class="ico" viewBox="0 0 9 9"><path d="M0.6 6 L3 3.6 L5.4 6 L3 8.4 Z" fill="#9a6cc0" stroke="#6b4594" stroke-width="0.6"/><path d="M1.8 5.6 L3 4.4 L4.2 5.6" fill="none" stroke="#e6d4f5" stroke-width="0.6"/><rect x="5.2" y="1" width="2.4" height="2.4" transform="rotate(45 6.4 2.2)" fill="#ecd574" stroke="#a8892c" stroke-width="0.5"/></svg><span class="tx">com.zving.advertise.AdvertisePublishTask</span></div>
<div class="row" style="top:321.68px"><svg class="ico" viewBox="0 0 9 9"><path d="M0.6 6 L3 3.6 L5.4 6 L3 8.4 Z" fill="#9a6cc0" stroke="#6b4594" stroke-width="0.6"/><path d="M1.8 5.6 L3 4.4 L4.2 5.6" fill="none" stroke="#e6d4f5" stroke-width="0.6"/><rect x="5.2" y="1" width="2.4" height="2.4" transform="rotate(45 6.4 2.2)" fill="#ecd574" stroke="#a8892c" stroke-width="0.5"/></svg><span class="tx">com.zving.advertise.impl.AdvertisePCPublishTarget</span></div>
<div class="row" style="top:333.46px"><svg class="ico" viewBox="0 0 9 9"><path d="M0.6 6 L3 3.6 L5.4 6 L3 8.4 Z" fill="#9a6cc0" stroke="#6b4594" stroke-width="0.6"/><path d="M1.8 5.6 L3 4.4 L4.2 5.6" fill="none" stroke="#e6d4f5" stroke-width="0.6"/><rect x="5.2" y="1" width="2.4" height="2.4" transform="rotate(45 6.4 2.2)" fill="#ecd574" stroke="#a8892c" stroke-width="0.5"/></svg><span class="tx">com.zving.advertise.impl.AdvKeywordsStrategy</span></div>
<div class="row" style="top:345.24px"><svg class="ico" viewBox="0 0 9 9"><path d="M0.6 6 L3 3.6 L5.4 6 L3 8.4 Z" fill="#9a6cc0" stroke="#6b4594" stroke-width="0.6"/><path d="M1.8 5.6 L3 4.4 L4.2 5.6" fill="none" stroke="#e6d4f5" stroke-width="0.6"/><rect x="5.2" y="1" width="2.4" height="2.4" transform="rotate(45 6.4 2.2)" fill="#ecd574" stroke="#a8892c" stroke-width="0.5"/></svg><span class="tx">com.zving.advertise.impl.AdvWeightStrategy</span></div>
<!-- scrollbar -->
<div class="a" style="left:354.2px;top:132px;width:8.8px;height:221px;background:#f0f0f0;"></div>
<div class="a" style="left:354px;top:218.2px;width:9.2px;height:112.2px;box-sizing:border-box;border:1px solid #9c9c9c;border-radius:1.5px;background:linear-gradient(90deg,#f4f4f4 0,#ebebeb 30%,#d6d6d6 50%,#c8c8c8 70%,#d8d8d8 100%);"></div>
<div class="a" style="left:356.8px;top:271.8px;width:3.6px;height:0.8px;background:#8a8a8a;box-shadow:0 1.7px 0 #8a8a8a,0 3.4px 0 #8a8a8a;"></div>
<div class="a" style="left:356.6px;top:136px;width:0;height:0;border-left:2.1px solid transparent;border-right:2.1px solid transparent;border-bottom:2.6px solid #444;"></div>
<div class="a" style="left:356.6px;top:346.8px;width:0;height:0;border-left:2.1px solid transparent;border-right:2.1px solid transparent;border-top:2.6px solid #444;"></div>

<!-- buttons -->
<div class="btn" style="left:366.8px;top:133.6px;width:28.2px;height:14.6px;line-height:13.8px;">Add</div>
<div class="btn" style="left:366.8px;top:152.6px;width:28.2px;height:14.8px;line-height:14px;font-size:7.1px;">Remove</div>
<div class="btn" style="left:366.8px;top:183px;width:28.2px;height:14.4px;line-height:13.8px;">Up</div>
<div class="btn" style="left:366.8px;top:202px;width:28.2px;height:14.6px;line-height:13.8px;">Down</div>

<!-- right section -->
<div class="a" style="left:409.4px;top:85px;width:381.4px;height:13px;background:linear-gradient(180deg,#e2eaf6 0,#edf2f9 50%,#ffffff 100%);border-radius:3px 3px 0 0;box-shadow:inset 0 0.8px 0 #dbe4f1;"></div>
<div class="t" style="left:414px;top:88px;font-weight:bold;color:#1f4278;font-size:7.5px;">Extend Item details</div>
<div class="t" style="left:415px;top:100px;">Selected extend action's detail information</div>

<div class="t" style="left:416.4px;top:116.9px;">ID:</div>
<div class="inp" style="left:471.8px;top:116.4px;width:313.6px;height:14px;"></div>
<div class="t tx2" style="left:474.7px;top:119.3px;">com.zving.advertise.AdvertisePriv</div>

<div class="t" style="left:416.6px;top:136.8px;">Service ID:</div>
<div class="inp" style="left:471.8px;top:136px;width:273.2px;height:13.8px;"></div>
<div class="t tx2" style="left:474.7px;top:138.2px;">com.zving.platform.service.MenuPrivService</div>
<div class="btn" style="left:748.4px;top:135.6px;width:36.6px;height:9.4px;line-height:7.6px;">Browse...</div>

<div class="t" style="left:416.6px;top:156.4px;color:#1f3a7a;"><u>Class:</u></div>
<div class="inp" style="left:471.8px;top:155.4px;width:273.2px;height:13.6px;"></div>
<div class="t tx2" style="left:474.7px;top:158.1px;">com.zving.advertise.AdvertisePriv</div>
<div class="btn" style="left:748.4px;top:154.8px;width:36.6px;height:9.4px;line-height:7.6px;">Browse...</div>

<div class="t" style="left:416.6px;top:174.8px;">Description:</div>
<div class="inp" style="left:471.8px;top:175px;width:306.4px;height:37.8px;"></div>
<svg class="a" style="left:779.2px;top:173.8px" width="9" height="10" viewBox="0 0 9 10"><path d="M0.6 0.6 L4.4 0.6 L6.2 2.4 L6.2 7.6 L0.6 7.6Z" fill="#fbfbf4" stroke="#8a8a7a" stroke-width="0.6"/><text x="1.4" y="5.8" font-size="4.4" fill="#4a6ab0" font-family="Liberation Sans,sans-serif">b</text><path d="M4 6.6 L6.4 6.6 L6.4 5.2 L8.8 7.4 L6.4 9.6 L6.4 8.2 L4 8.2Z" fill="#f3cc4a" stroke="#b88c22" stroke-width="0.4"/></svg>

<!-- bottom tabs -->
<div class="a" style="left:20.1px;top:394.8px;width:777.8px;height:13.4px;background:#f0f0f0;border-top:1px solid #bcbcbc;box-sizing:border-box;box-shadow:inset 0 1px 0 #fafafa;"></div>
<div class="a" style="left:20.1px;top:406.6px;width:777.8px;height:1.5px;background:#dfe8f3;"></div>
<div class="a" style="left:55.4px;top:394.6px;width:27.4px;height:12.6px;background:#fff;border:1px solid #c4c4c4;border-top:none;border-bottom:none;box-sizing:border-box;"></div>
<div class="a" style="left:109.6px;top:395.6px;width:1px;height:10.8px;background:#c8c8c8;"></div>
<div class="a" style="left:130.4px;top:395.6px;width:1px;height:10.8px;background:#c8c8c8;"></div>
<div class="t" style="left:22.3px;top:397.2px;font-size:7.25px;">Overview</div>
<div class="t" style="left:58px;top:397.2px;font-size:7.1px;">Extend</div>
<div class="t" style="left:85.7px;top:397.2px;font-size:7.3px;">Menus</div>
<div class="t" style="left:113.4px;top:397.2px;font-size:6.9px;">Files</div>
<div class="a" style="left:17.9px;top:407.8px;width:781.5px;height:1.8px;background:#a3b1c5;"></div>
<div class="a" style="left:0;top:409.6px;width:800px;height:5px;background:linear-gradient(180deg,#e6e6e6 0,#f0f0f0 1.5px);"></div>
<div class="a" style="left:682px;top:411.2px;width:118px;height:3px;background:#f8f8f8;border-top:1px solid #d0d0d0;border-left:1px solid #d0d0d0;"></div>
<div class="a" style="left:27px;top:411.8px;width:3.6px;height:3px;border-radius:1.8px 1.8px 0 0;border:0.9px solid #4a78b8;border-bottom:none;box-sizing:border-box;"></div>
<div class="a" style="left:15.4px;top:412.4px;width:2.4px;height:2px;background:#e8c860;border-radius:1px;"></div>
<div class="a" style="left:3.4px;top:412.6px;width:2px;height:2px;background:#c8c8c8;border-radius:1px;"></div>
</div>
</body></html>
